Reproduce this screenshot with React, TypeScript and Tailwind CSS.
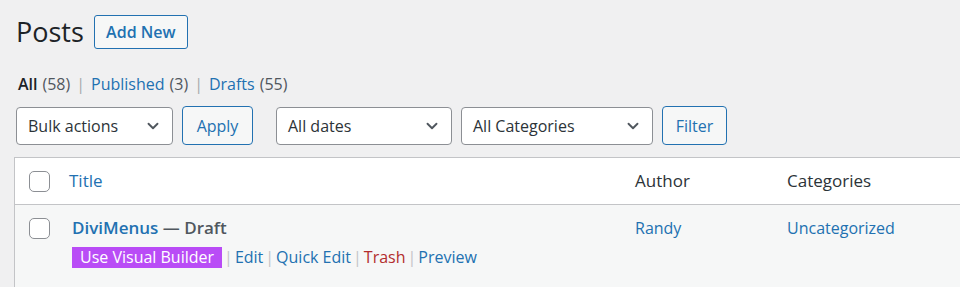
import React from 'react';
import { ChevronDown } from 'lucide-react';

const font = { fontFamily: '"Open Sans", "Noto Sans", sans-serif' };

const Select: React.FC<{ label: string; width: string }> = ({ label, width }) => (
  <div
    className={`flex h-[38px] items-center justify-between rounded-[4px] border border-[#8c8f94] bg-white pl-[11px] pr-[10px] text-[16px] text-[#2c3338] ${width}`}
  >
    <span>{label}</span>
    <ChevronDown className="h-[18px] w-[18px] text-[#50575e]" strokeWidth={2.5} />
  </div>
);

const Button: React.FC<{ label: string; width: string }> = ({ label, width }) => (
  <button
    className={`flex h-[39px] items-center justify-center rounded-[4px] border border-[#2271b1] bg-[#f6f7f7] text-[16px] text-[#2271b1] ${width}`}
  >
    {label}
  </button>
);

const Checkbox = () => (
  <div className="h-[21px] w-[21px] rounded-[5px] border border-[#8c8f94] bg-white" />
);

const Sep = () => <span className="px-[2px] text-[#c3c4c7]">|</span>;

export default function App() {
  return (
    <div className="h-[287px] w-[960px] overflow-hidden bg-[#f0f0f1]" style={font}>
      {/* page title */}
      <div className="flex items-center pl-[16px] pt-[15px]">
        <h1 className="text-[27px] font-normal leading-[34px] text-[#1d2327]">Posts</h1>
        <button className="ml-[10px] flex h-[34px] w-[94px] items-center justify-center rounded-[3px] border border-[#2271b1] bg-[#f6f7f7] text-[16px] font-semibold text-[#2271b1]">
          Add New
        </button>
      </div>

      {/* views */}
      <div className="mt-[24px] flex items-center pl-[18px] text-[16px] leading-[22px] text-[#50575e]">
        <span className="font-semibold text-[#1d2327]">All</span>
        <span className="ml-[5px]">(58)</span>
        <span className="px-[6px] text-[#a7aaad]">|</span>
        <span className="text-[#2271b1]">Published</span>
        <span className="ml-[5px]">(3)</span>
        <span className="px-[6px] text-[#a7aaad]">|</span>
        <span className="text-[#2271b1]">Drafts</span>
        <span className="ml-[5px]">(55)</span>
      </div>

      {/* filters */}
      <div className="mt-[11px] flex items-center pl-[16px]">
        <Select label="Bulk actions" width="w-[157px]" />
        <div className="ml-[9px]">
          <Button label="Apply" width="w-[71px]" />
        </div>
        <div className="ml-[23px]">
          <Select label="All dates" width="w-[176px]" />
        </div>
        <div className="ml-[9px]">
          <Select label="All Categories" width="w-[192px]" />
        </div>
        <div className="ml-[9px]">
          <Button label="Filter" width="w-[65px]" />
        </div>
      </div>

      {/* table */}
      <div className="ml-[14px] mt-[12px] w-[960px] border-l border-t border-[#c3c4c7]">
        <div className="flex h-[47px] items-center border-b border-[#c3c4c7] bg-white text-[17px]">
          <div className="w-[54px] pl-[14px]">
            <Checkbox />
          </div>
          <div className="w-[566px] text-[#2271b1]">Title</div>
          <div className="w-[152px] text-[#2c3338]">Author</div>
          <div className="text-[#2c3338]">Categories</div>
        </div>
        <div className="flex h-[90px] items-start bg-[#f6f7f7] pt-[9px]">
          <div className="w-[54px] pl-[14px] pt-[4px]">
            <Checkbox />
          </div>
          <div className="w-[566px] pl-[3px]">
            <div className="text-[17px] font-semibold leading-[28px]">
              <span className="text-[#2271b1]">DiviMenus</span>
              <span className="text-[#50575e]"> — Draft</span>
            </div>
            <div className="mt-[5px] flex items-center text-[16px] leading-[21px]">
              <span className="bg-[#b94cf6] px-[8px] text-white">Use Visual Builder</span>
              <Sep />
              <span className="text-[#2271b1]">Edit</span>
              <Sep />
              <span className="text-[#2271b1]">Quick Edit</span>
              <Sep />
              <span className="text-[#b32d2e]">Trash</span>
              <Sep />
              <span className="text-[#2271b1]">Preview</span>
            </div>
          </div>
          <div className="w-[152px] text-[16px] leading-[28px] text-[#2271b1]">Randy</div>
          <div className="text-[16px] leading-[28px] text-[#2271b1]">Uncategorized</div>
        </div>
      </div>
    </div>
  );
}
